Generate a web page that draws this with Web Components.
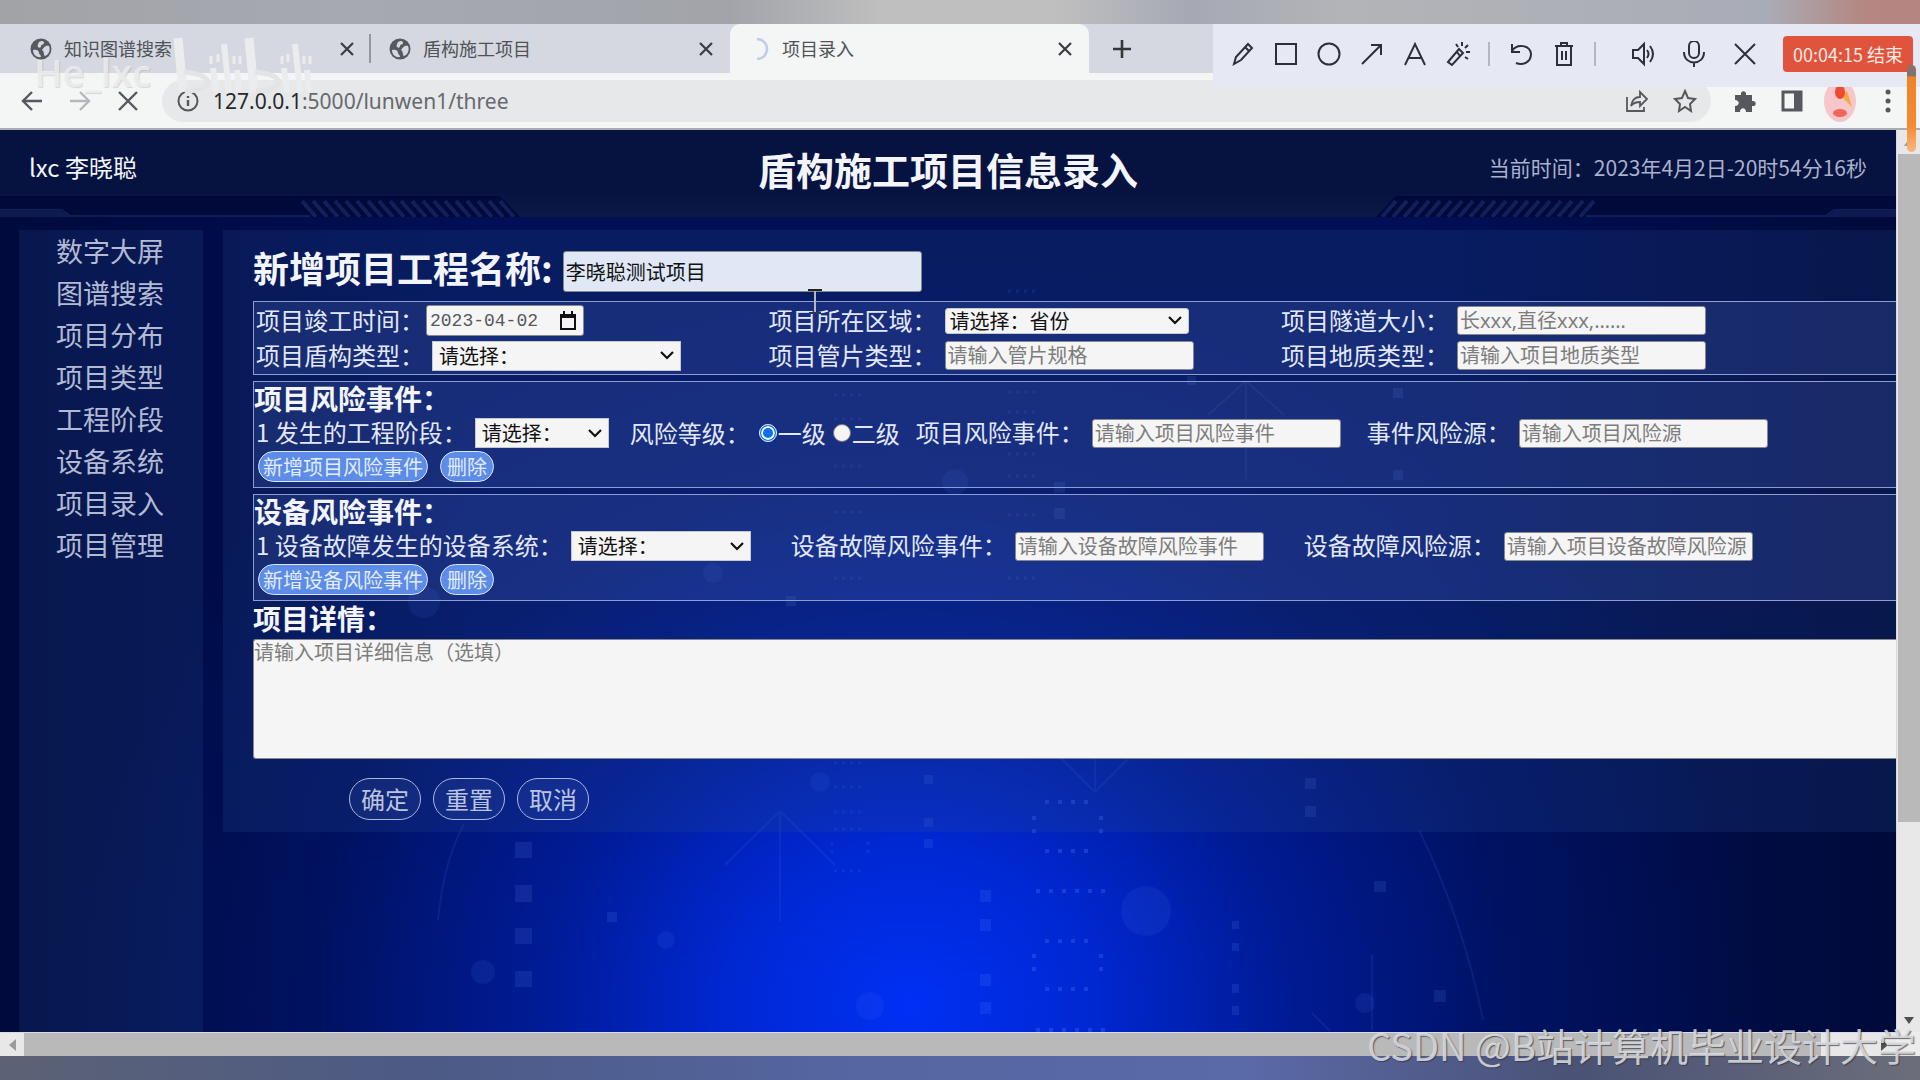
<!DOCTYPE html>
<html lang="zh-CN">
<head>
<meta charset="utf-8">
<title>项目录入</title>
<style>
    body {
        margin: 0;
        font-family: "Noto Sans CJK SC", sans-serif;
        background: #5c6478;
        overflow: hidden;
    }
    .risk-level { margin-left: 21px; }
    .risk-event { margin-left: 16px; }
    .risk-source { margin-left: 26px; }
    .device-event, .device-source { margin-left: 40px; }
</style>
</head>
<body>
<app-window>
    <browser-tab slot="tabs" title="知识图谱搜索"></browser-tab>
    <browser-tab slot="tabs" title="盾构施工项目"></browser-tab>
    <browser-tab slot="tabs" title="项目录入" active></browser-tab>
    <record-toolbar slot="overlay" time="00:04:15"></record-toolbar>
    <address-bar slot="address" host="127.0.0.1" path=":5000/lunwen1/three"></address-bar>

    <page-header user="lxc 李晓聪" time="当前时间：2023年4月2日-20时54分16秒">盾构施工项目信息录入</page-header>
    <page-body>
        <side-nav slot="nav" items="数字大屏,图谱搜索,项目分布,项目类型,工程阶段,设备系统,项目录入,项目管理"></side-nav>
        <project-form>
            <form-field slot="name" kind="title" label="新增项目工程名称:" value="李晓聪测试项目"></form-field>
            <field-box columns>
                <form-field kind="date" label="项目竣工时间：" value="2023-04-02"></form-field>
                <form-field kind="select" size="region" label="项目所在区域：" value="请选择：省份"></form-field>
                <form-field label="项目隧道大小：" placeholder="长xxx,直径xxx,……"></form-field>
                <form-field kind="select" label="项目盾构类型：" value="请选择："></form-field>
                <form-field label="项目管片类型：" placeholder="请输入管片规格"></form-field>
                <form-field label="项目地质类型：" placeholder="请输入项目地质类型"></form-field>
            </field-box>
            <field-box heading="项目风险事件：" add="新增项目风险事件">
                <form-field kind="select" size="small" label="1 发生的工程阶段：" value="请选择："></form-field>
                <radio-field class="risk-level" label="风险等级：" options="一级,二级"></radio-field>
                <form-field class="risk-event" label="项目风险事件：" placeholder="请输入项目风险事件"></form-field>
                <form-field class="risk-source" label="事件风险源：" placeholder="请输入项目风险源"></form-field>
            </field-box>
            <field-box heading="设备风险事件：" add="新增设备风险事件">
                <form-field kind="select" size="medium" label="1 设备故障发生的设备系统：" value="请选择："></form-field>
                <form-field class="device-event" label="设备故障风险事件：" placeholder="请输入设备故障风险事件"></form-field>
                <form-field class="device-source" label="设备故障风险源：" placeholder="请输入项目设备故障风险源"></form-field>
            </field-box>
            <form-field slot="detail" kind="area" label="项目详情：" placeholder="请输入项目详细信息（选填）"></form-field>
        </project-form>
    </page-body>
    <video-marks slot="overlay"></video-marks>
</app-window>

<script>
class BaseElement extends HTMLElement {
    constructor() {
        super();
        this.attachShadow({ mode: 'open' });
    }
    attr(name) {
        return this.getAttribute(name) || '';
    }
    connectedCallback() {
        this.shadowRoot.innerHTML = this.render();
    }
}

class AppWindow extends BaseElement {
    render() {
        return /*html*/`
        <style>
            :host { display: flex; flex-direction: column; height: 100vh; position: relative; }
            .desk-top { height: 24px; background: linear-gradient(90deg, #a2a3a7, #a6a9b2 18%, #a2a4aa 38%, #bfbfbf 46%, #bfbfbf 55%, #a6a9b4 62%, #b3b4b8 70%, #a8acb6 92%, #b48782 97%, #b58580); }
            .tabs { display: flex; height: 49px; padding-left: 12px; background: #d5d8e0; }
            .new-tab { border: 0; background: none; padding: 0; margin-left: 22px; }
            .new-tab svg { display: block; }
            .view { flex: 1; min-height: 0; display: grid; grid-template: minmax(0, 1fr) 24px / minmax(0, 1fr) 24px; }
            .page {
                position: relative; overflow: hidden; display: flex; flex-direction: column;
                background:
                    radial-gradient(ellipse 45% 84% at 48% 97%, #0030f4 0%, rgba(0, 42, 222, .9) 22%, rgba(0, 33, 180, .66) 44%, rgba(0, 24, 130, .34) 70%, rgba(0, 14, 80, 0) 100%),
                    linear-gradient(90deg, #000a3c, #000f56 25%, #000f56 75%, #000a3a);
            }
            .art { position: absolute; left: 0; bottom: 0; width: 100%; height: 100%; opacity: .5; }
            .vbar { display: flex; flex-direction: column; align-items: center; background: #e8e8e8; border-left: 1px solid #d5dbe8; }
            .vbar i { height: 24px; display: flex; align-items: center; }
            .vbar b { flex: 0 1 668px; width: 22px; background: #b9b9b9; }
            .vbar i:last-child { margin-top: auto; }
            .hbar { display: flex; align-items: center; background: #e8e8e8; border-top: 1px solid #d5dbe8; box-sizing: border-box; }
            .hbar i { width: 24px; display: flex; justify-content: center; }
            .hbar b { flex: 1; align-self: stretch; background: #b9b9b9; margin-right: 51px; }
            .corner { background: #ececec; }
            .desk-bottom { height: 24px; background: linear-gradient(90deg, #5c6275, #4c5a85 22%, #5566a2 45%, #5a69a8 65%, #4a5275 82%, #6b6e7a); }
        </style>
        <div class="desk-top"></div>
        <div class="tabs">
            <slot name="tabs"></slot>
            <button class="new-tab" aria-label="new tab"><svg width="22" height="22" viewBox="0 0 22 22" stroke="#33363b" stroke-width="2.6"><path d="M11 2v18M2 11h18"/></svg></button>
        </div>
        <slot name="address"></slot>
        <div class="view">
            <div class="page">
                <svg class="art" viewBox="0 130 1896 902" preserveAspectRatio="xMidYMax slice" fill="none" aria-hidden="true">
                    <g fill="#6f9cff" fill-opacity=".26">
                        <path d="M515 842h17v16h-17zM515 885h17v17h-17zM515 928h17v16h-17zM515 971h17v16h-17z"/>
                        <path d="M607 912h10v10h-10zM980 890h11v12h-11zM980 919h11v12h-11zM980 974h11v12h-11zM980 1002h11v12h-11z"/>
                        <path d="M924 775h9v9h-9zM924 818h9v9h-9zM924 839h9v9h-9zM1305 778h11v11h-11zM1305 806h11v11h-11z"/>
                        <path d="M1374 881h12v11h-12zM1434 990h12v12h-12zM1232 921h7v8h-7zM1232 943h7v8h-7zM1232 984h7v9h-7zM1232 1006h7v9h-7z"/>
                        <path d="M1393 388h10v10h-10zM1393 470h10v10h-10zM1054 482h11v11h-11zM1054 508h11v11h-11zM1187 376h9v9h-9zM786 596h10v10h-10z"/>
                    </g>
                    <g fill="#5a86ff" fill-opacity=".2">
                        <circle cx="1146" cy="911" r="25"/><circle cx="483" cy="972" r="12"/><circle cx="870" cy="1006" r="14"/>
                        <circle cx="1365" cy="1003" r="10"/><circle cx="820" cy="782" r="10"/><circle cx="955" cy="482" r="13"/>
                        <circle cx="424" cy="602" r="16"/><circle cx="713" cy="573" r="10"/><circle cx="666" cy="940" r="9"/>
                    </g>
                    <g stroke="#4a7cff" stroke-opacity=".6" stroke-width="4" stroke-dasharray="4 9">
                        <path d="M1045 802h52M1101 816v22M1045 851h52M1034 816v22"/>
                        <path d="M1036 891h74M1045 941h52M1101 954v24M1045 989h52M1034 954v24M1036 1030h74"/>
                    </g>
                    <g stroke="#4a7cff" stroke-opacity=".3" stroke-width="3" stroke-dasharray="3 5">
                        <path d="M834 763h32M834 787h32M834 812h32M834 829h32M834 871h32M832 842v16M868 842v16M834 350h32M834 395h32M834 419h32M834 466h32M834 512h32M834 578h32"/>
                        <path d="M1008 291h28M1008 392h28M1008 412h28M1008 454h28M1008 476h28M1008 515h28M1008 578h28"/>
                    </g>
                    <g stroke="#5a80f0" stroke-opacity=".24" stroke-width="2">
                        <path d="M725 865l55-54 55 54M780 811v110M1060 757l35 35 35-35M1095 757v34M1208 415l38-34 38 34M1246 381v98M438 920q6-60 26-96M1419 830q44 90 64 190M1312 1013l18 18M1372 955v75"/>
                    </g>
                </svg>
                <slot></slot>
            </div>
            <div class="vbar">
                <i><svg width="10" height="7"><path d="M0 7l5-7 5 7z" fill="#9a9a9a"/></svg></i><b></b>
                <i><svg width="10" height="7"><path d="M0 0l5 7 5-7z" fill="#505050"/></svg></i>
            </div>
            <div class="hbar">
                <i><svg width="7" height="12"><path d="M7 0L0 6l7 6z" fill="#9a9a9a"/></svg></i><b></b>
                <i><svg width="7" height="12"><path d="M0 0l7 6-7 6z" fill="#505050"/></svg></i>
            </div>
            <div class="corner"></div>
        </div>
        <div class="desk-bottom"></div>
        <slot name="overlay"></slot>`;
    }
}

class BrowserTab extends BaseElement {
    render() {
        const globe = `<circle cx="11" cy="11" r="10.500" fill="#565a5f"/><path d="M3 12c3-1 6 0 6 3 0 2 2 1 2 4-5 1-8-3-8-7zM9 4c3-2 5-1 5 1s-3 1-3 3-2 2-3 1 0-3 1-5zM12 12c2-2 3-5 7-4 2 5-1 9-4 10-2-1 0-4-3-6z" fill="#d5d8e0"/>`;
        const spinner = `<path d="M9 1a10 10 0 0 1 0 20" fill="none" stroke="#bfcdea" stroke-width="2.500"/>`;
        return /*html*/`
        <style>
            :host { display: flex; align-items: center; box-sizing: border-box; width: 359px; padding: 0 17px 0 18px; position: relative; color: #4f5257; }
            :host(:first-of-type)::after { content: ""; position: absolute; right: 0; top: 10px; height: 29px; border-right: 2px solid #94979d; }
            :host([active]) { background: #f4f5f5; border-radius: 10px 10px 0 0; }
            span { flex: 1; margin-left: 12px; padding-bottom: 2px; font-size: 18px; line-height: 24px; }
            button { border: 0; background: none; padding: 0; }
            svg { display: block; }
        </style>
        <svg width="22" height="22" viewBox="0 0 22 22">${this.hasAttribute('active') ? spinner : globe}</svg>
        <span>${this.attr('title')}</span>
        <button aria-label="close"><svg width="14" height="14" viewBox="0 0 14 14" stroke="#3a3d42" stroke-width="2.200"><path d="M1 1l12 12M13 1L1 13"/></svg></button>`;
    }
}

class RecordToolbar extends BaseElement {
    icon(path, cls = '') {
        return `<button class="${cls}"><svg width="26" height="26" viewBox="0 0 26 26">${path}</svg></button>`;
    }
    render() {
        return /*html*/`
        <style>
            :host { position: absolute; right: 0; top: 24px; width: 707px; height: 63px; box-sizing: border-box; padding: 0 7px 3px 8px; display: flex; align-items: center; background: #e6e9f4; }
            button { border: 0; padding: 0; background: none; width: 43px; display: flex; justify-content: center; }
            .wide { width: 51px; }
            .first { margin-left: 12px; }
            svg { fill: none; stroke: #2d3038; stroke-width: 2; }
            i { width: 2px; height: 24px; margin: 0 9px; background: #b4b6c0; }
            .stop { margin: 0 0 0 auto; width: 130px; height: 36px; align-items: center; border-radius: 4px; background: #e0543d; color: #fbe9e4; font: 18px/24px "Noto Sans CJK SC", sans-serif; }
        </style>
        ${this.icon('<path d="M4 23l2-7L18 3l4 4L11 19zM15 6l4 4"/>')}
        ${this.icon('<path d="M3 3h20v20H3z"/>')}
        ${this.icon('<circle cx="13" cy="13" r="10.500"/>')}
        ${this.icon('<path d="M3 23L22 4M12 4h10v10"/>')}
        ${this.icon('<path d="M3 24L13 3l10 21M6 17h14"/>')}
        ${this.icon('<path d="M3 21L14 8l4 4L7 24zM12 11l3 4M17 1v4M23 4l-3 3M25 11h-4M11 3l2 3M20 16l3 2"/>')}
        <i></i>
        ${this.icon('<path d="M4 3v8h8M4 10C9 2 22 4 23 13c0 8-8 12-15 9"/>')}
        ${this.icon('<path d="M4 5h18M10 5V2h6v3M6 5v19h14V5M11 10v9M15 10v9"/>')}
        <i></i>
        ${this.icon('<path d="M3 9h5l6-6v20l-6-6H3zM17 9q3 4 0 8M20 5q6 8 0 16"/>', 'wide first')}
        ${this.icon('<rect x="8" y="0" width="10" height="17" rx="5"/><path d="M3 11c0 14 20 14 20 0M13 21v5"/>', 'wide')}
        ${this.icon('<path d="M3 3l20 20M23 3L3 23"/>', 'wide')}
        <button class="stop">${this.attr('time')} 结束</button>`;
    }
}

class AddressBar extends BaseElement {
    render() {
        return /*html*/`
        <style>
            :host { display: flex; align-items: center; height: 57px; box-sizing: border-box; padding: 0 20px; background: #f4f5f5; border-bottom: 2px solid #a9abb0; }
            button { border: 0; padding: 0; background: none; width: 24px; height: 24px; }
            svg { display: block; fill: none; stroke: #55585d; stroke-width: 2.400; }
            .nav { display: flex; gap: 24px; }
            .url { flex: 1; display: flex; align-items: center; height: 42px; margin: 0 22px; padding: 0 14px; border-radius: 21px; background: #e7e8ea; }
            a { flex: 1; margin-left: 13px; font: 21px/28px "Noto Sans", sans-serif; color: #66696e; text-decoration: none; }
            a b { font-weight: 400; color: #26282c; }
            .url button + button { margin-left: 24px; }
            .tools { display: flex; align-items: center; gap: 23px; }
            .tools button:nth-child(3) { width: 32px; height: 44px; margin: 0 -3px; }
        </style>
        <div class="nav">
            <button aria-label="back"><svg width="24" height="24"><path d="M22 12H3M12 3l-9 9 9 9"/></svg></button>
            <button aria-label="forward"><svg width="24" height="24" style="stroke: #b5b7ba"><path d="M2 12h19M12 3l9 9-9 9"/></svg></button>
            <button aria-label="stop"><svg width="24" height="24"><path d="M3 3l18 18M21 3L3 21"/></svg></button>
        </div>
        <div class="url">
            <svg width="24" height="24"><circle cx="12" cy="12" r="9.500" stroke-width="2"/><path d="M12 11v6M12 7v2"/></svg>
            <a href="#"><b>${this.attr('host')}</b>${this.attr('path')}</a>
            <button aria-label="share"><svg width="24" height="24"><path d="M2 8v14h17v-4M6 17c1-6 4-9 9-9V3l7 7-7 7v-4c-4 0-7 1-9 4z" stroke-width="1.800"/></svg></button>
            <button aria-label="star"><svg width="24" height="24"><path d="M12 2l3 7 7 1-5 5 1 7-6-4-6 4 1-7-5-5 7-1z" stroke-width="2"/></svg></button>
        </div>
        <div class="tools">
            <button aria-label="extensions"><svg width="24" height="24"><path d="M2 6h6c-1-5 6-5 5 0h6v6c5-1 5 6 0 5v6h-6c0-5-6-5-6 0H2v-6c5 0 5-6 0-6z" fill="#55585d" stroke="none"/></svg></button>
            <button aria-label="side panel"><svg width="24" height="24"><path d="M3 3h18v18H3z" stroke-width="3"/><path d="M14 3h7v18h-7z" fill="#55585d" stroke="none"/></svg></button>
            <button aria-label="profile"><svg width="32" height="44"><g stroke="none"><ellipse cx="16" cy="22" rx="16" ry="21" fill="#f6c6ca"/><path d="M17 17l6-5 5 16z" fill="#f8a83c"/><ellipse cx="16" cy="13" rx="5" ry="7" fill="#ee4b35"/><ellipse cx="16" cy="34" rx="7" ry="4" fill="#f0655a"/></g></svg></button>
            <button aria-label="menu"><svg width="24" height="24"><g fill="#55585d" stroke="none"><circle cx="12" cy="3" r="2.500"/><circle cx="12" cy="12" r="2.500"/><circle cx="12" cy="21" r="2.500"/></g></svg></button>
        </div>`;
    }
}

class PageHeader extends BaseElement {
    render() {
        // hatch strokes, drawn for the left side and mirrored for the right one
        let hatch = '';
        for (let x = 302; x < 504; x += 11) hatch += `M${x} 71l14 16`;
        const side = `<path d="M0 66H500L520 87H0z" fill="#000a3a"/><path d="${hatch}" stroke="#12205a" stroke-width="4"/><path d="M0 80h62l8 6h240" stroke="#101f5a" stroke-width="2"/><path d="M0 80h62l8 7H0z" fill="#0d1b52"/>`;
        return /*html*/`
        <style>
            :host { position: relative; display: grid; grid-template-columns: 1fr auto 1fr; align-items: center; height: 87px; box-sizing: border-box; padding: 0 29px 14px; background: linear-gradient(#06123f 70%, #0b1948); color: #f3f5fb; }
            svg { position: absolute; inset: 0; width: 100%; height: 100%; }
            span, h1, time { position: relative; }
            span { font-size: 24px; line-height: 32px; }
            h1 { margin: 0; font-size: 38px; line-height: 48px; padding-top: 4px; }
            time { justify-self: end; font-size: 21px; line-height: 28px; color: #a9b1cd; }
        </style>
        <svg viewBox="0 0 1896 87" preserveAspectRatio="none" fill="none" aria-hidden="true">${side}<g transform="translate(1896) scale(-1 1)">${side}</g></svg>
        <span>${this.attr('user')}</span>
        <h1><slot></slot></h1>
        <time>${this.attr('time')}</time>`;
    }
}

class PageBody extends BaseElement {
    render() {
        return /*html*/`
        <style>
            :host { position: relative; flex: 1; display: flex; gap: 20px; padding: 13px 0 0 19px; align-items: flex-start; }
            ::slotted(side-nav) { align-self: stretch; flex: none; }
            ::slotted(project-form) { flex: 1; min-width: 0; }
        </style>
        <slot name="nav"></slot>
        <slot></slot>`;
    }
}

class SideNav extends BaseElement {
    render() {
        const links = this.attr('items').split(',').map(item => `<a href="#">${item}</a>`).join('');
        return /*html*/`
        <style>
            :host { display: block; width: 184px; background: rgba(40, 80, 150, .2); }
            nav { display: flex; flex-direction: column; align-items: center; padding-right: 2px; }
            a { font-size: 27px; line-height: 42px; color: #b3bad3; text-decoration: none; }
        </style>
        <nav>${links}</nav>`;
    }
}

class ProjectForm extends BaseElement {
    render() {
        return /*html*/`
        <style>
            :host { display: block; background: rgba(40, 80, 150, .2); }
            form { display: flex; flex-direction: column; gap: 6px; padding: 21px 0 12px 30px; }
            ::slotted([slot="name"]) { margin-bottom: 3px; }
            ::slotted([slot="detail"]) { margin-top: -6px; }
            .actions { display: flex; gap: 12px; margin: 13px 0 0 96px; }
            .actions button { width: 72px; height: 42px; padding: 0; border: 1px solid #aab6e0; border-radius: 21px; background: rgba(80, 110, 190, .15); color: #bcc5e0; font: 24px/32px "Noto Sans CJK SC", sans-serif; }
        </style>
        <form onsubmit="return false">
            <slot name="name"></slot>
            <slot></slot>
            <slot name="detail"></slot>
            <div class="actions"><button>确定</button><button type="reset">重置</button><button type="button">取消</button></div>
        </form>`;
    }
}

class FieldBox extends BaseElement {
    render() {
        const heading = this.attr('heading');
        return /*html*/`
        <style>
            :host { display: block; box-sizing: border-box; padding: 0 0 5px 2px; border: 1px solid #8d9dd4; border-right: 0; background: rgba(100, 130, 220, .18); }
            :host([columns]) { padding: 1px 0 1px 2px; }
            h2 { margin: 0 0 0 -2px; padding-bottom: 4px; font-size: 28px; line-height: 32px; color: #f3f5fb; }
            .row { display: flex; align-items: center; height: 30px; }
            :host([columns]) .row { display: grid; grid-template-columns: 5fr 5fr 6fr; grid-auto-rows: 35px; height: auto; }
            .buttons { display: flex; gap: 12px; margin: 3px 0 0 2px; }
            button { min-width: 54px; height: 31px; padding: 0 4px; border: 1px solid #dbe6ff; border-radius: 16px; background: #5c8ce8; color: #e3edff; font: 20px/28px "Noto Sans CJK SC", sans-serif; }
        </style>
        ${heading ? `<h2>${heading}</h2>` : ''}
        <div class="row"><slot></slot></div>
        ${heading ? `<div class="buttons"><button type="button">${this.attr('add')}</button><button type="button">删除</button></div>` : ''}`;
    }
}

class FormField extends BaseElement {
    control() {
        const value = this.attr('value');
        switch (this.attr('kind')) {
            case 'select':
                return `<div class="wrap"><select id="c"><option>${value}</option></select><svg width="14" height="9"><path d="M1 1l6 6 6-6" fill="none" stroke="#111" stroke-width="2.200"/></svg></div>`;
            case 'date':
                return `<div class="wrap"><input id="c" value="${value}"><svg width="18" height="20"><path d="M2 4h14v14H2zM5 0v4M13 0v4" fill="none" stroke="#111" stroke-width="2"/><path d="M1 3h16v4H1z" fill="#111"/></svg></div>`;
            case 'area':
                return `<textarea id="c" placeholder="${this.attr('placeholder')}"></textarea>`;
            default:
                return `<input id="c" value="${value}" placeholder="${this.attr('placeholder')}">`;
        }
    }
    render() {
        return /*html*/`
        <style>
            :host { display: flex; align-items: center; gap: 8px; }
            label { padding-bottom: 2px; font-size: 24px; line-height: 28px; color: #e2e8fa; white-space: nowrap; }
            input, select, textarea { display: block; box-sizing: border-box; margin: 0; border: 1px solid #85888f; background: #f5f5f5; color: #111; font: 20px/24px "Noto Sans CJK SC", sans-serif; }
            input { width: 249px; height: 29px; padding: 0 2px; border-radius: 3px; font-family: "Noto Sans", "Noto Sans CJK SC", sans-serif; }
            ::placeholder { color: #7d7d7d; }
            .wrap { display: grid; align-items: center; }
            .wrap > * { grid-area: 1 / 1; }
            .wrap svg { justify-self: end; margin-right: 7px; pointer-events: none; }
            select { appearance: none; width: 249px; height: 30px; padding: 0 6px; border-color: #c5c8cf; }
            :host([size="small"]) select { width: 134px; }
            :host([size="medium"]) select { width: 180px; }
            :host([size="region"]) select { width: 244px; height: 26px; padding: 0 4px; border-radius: 3px; }
            :host([kind="date"]) { gap: 2px; }
            :host([kind="date"]) input { width: 158px; height: 31px; padding: 0 3px; color: #55585d; font: 18px/24px "Liberation Mono", monospace; }
            :host([kind="title"]) { gap: 10px; }
            :host([kind="title"]) label { font-size: 36px; line-height: 32px; font-weight: 700; color: #f3f5fb; padding-bottom: 9px; }
            :host([kind="title"]) input { width: 359px; height: 41px; background: #dfe8f4; }
            :host([kind="area"]) { flex-direction: column; align-items: stretch; gap: 0; }
            :host([kind="area"]) label { font-size: 28px; line-height: 34px; font-weight: 700; color: #f3f5fb; padding-bottom: 4px; }
            textarea { height: 120px; padding: 0; border-radius: 3px 0 0 3px; border-right: 0; resize: none; }
        </style>
        <label for="c">${this.attr('label')}</label>
        ${this.control()}`;
    }
}

class RadioField extends BaseElement {
    render() {
        const options = this.attr('options').split(',').map((text, i) =>
            `<label><input type="radio" name="level"${i ? '' : ' checked'}>${text}</label>`).join('');
        return /*html*/`
        <style>
            :host { display: flex; align-items: center; gap: 8px; font-size: 24px; line-height: 30px; color: #e2e8fa; white-space: nowrap; }
            div { display: flex; gap: 6px; }
            label { display: flex; align-items: center; }
            input { appearance: none; box-sizing: border-box; width: 18px; height: 18px; margin: 0 1px; border: 1px solid #777; border-radius: 50%; background: #f5f5f5; }
            input:checked { border: 2px solid #0a6ff0; box-shadow: inset 0 0 0 2px #fff; background: #0a6ff0; outline: 1px solid #e8efff; outline-offset: -1px; }
        </style>
        <span id="l">${this.attr('label')}</span>
        <div role="radiogroup" aria-labelledby="l">${options}</div>`;
    }
}

class VideoMarks extends BaseElement {
    render() {
        return /*html*/`
        <style>
            :host { position: absolute; inset: 0; pointer-events: none; }
            .csdn { position: absolute; right: 4px; bottom: 7px; font-size: 38px; line-height: 56px; color: rgba(224, 226, 230, .85); text-shadow: 1px 1px 1px rgba(50, 50, 60, .7); white-space: nowrap; }
            .author { position: absolute; left: 34px; top: 52px; font: 600 38px/40px "Open Sans", sans-serif; color: rgba(240, 240, 241, .8); text-shadow: 1px 1px 1px rgba(140, 142, 148, .3); }
            .logo { position: absolute; left: 170px; top: 34px; }
            .pen { position: absolute; right: 4px; top: 65px; width: 9px; height: 87px; border-radius: 5px; background: linear-gradient(#83736c 12%, #f08228 14%, #f68b33 70%, #f9b77c); }
            .caret { position: absolute; left: 807px; top: 289px; }
        </style>
        <span class="author">He_lxc</span>
        <svg class="logo" width="144" height="62" viewBox="0 0 144 62" fill="none" stroke="#ebecee" stroke-width="7" aria-hidden="true">
            <path d="M8 4l5 54M79 4l5 54" stroke-width="9"/>
            <path d="M14 38c34 3 29 19 1 19M85 38c34 3 29 19 1 19" stroke="#e3e4e6" stroke-width="5"/>
            <path d="M43 34l3 24M54 10l5 48M67 36l2 22M114 34l3 24M125 10l5 48M137 36l2 22" stroke-width="6"/>
            <path d="M41 22v8M48 20v8M64 22v8M70 22v8M112 22v8M118 20v8M134 22v8M140 22v8" stroke-width="3"/>
        </svg>
        <svg class="caret" width="16" height="26" fill="none" stroke-width="2"><path d="M1 1h14" stroke="#222"/><path d="M8 2v22" stroke="#b6b8b4"/><path d="M2 24h12" stroke="#2a3560"/></svg>
        <i class="pen"></i>
        <span class="csdn">CSDN @B站计算机毕业设计大学</span>`;
    }
}

window.customElements.define('app-window', AppWindow);
window.customElements.define('browser-tab', BrowserTab);
window.customElements.define('record-toolbar', RecordToolbar);
window.customElements.define('address-bar', AddressBar);
window.customElements.define('page-header', PageHeader);
window.customElements.define('page-body', PageBody);
window.customElements.define('side-nav', SideNav);
window.customElements.define('project-form', ProjectForm);
window.customElements.define('field-box', FieldBox);
window.customElements.define('form-field', FormField);
window.customElements.define('radio-field', RadioField);
window.customElements.define('video-marks', VideoMarks);
</script>
</body>
</html>
